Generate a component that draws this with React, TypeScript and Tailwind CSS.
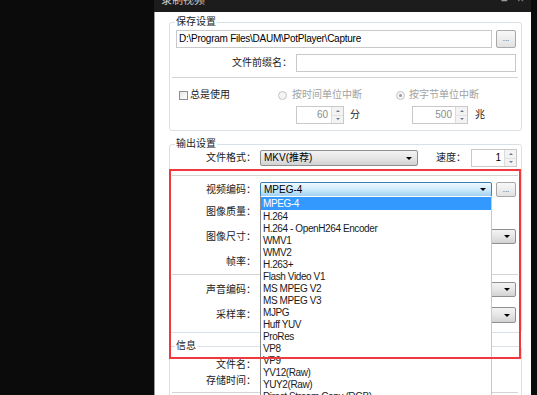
import { ReactNode } from 'react';

const Arrow = () => (
  <span className="mr-[5px] border-x-[3px] border-t-[3px] border-x-transparent border-t-black" />
);

const Combo = ({
  text,
  className = '',
  focused = false,
  children,
}: {
  text?: string;
  className?: string;
  focused?: boolean;
  children?: ReactNode;
}) => (
  <div
    className={`relative flex items-center rounded-[2px] border ${
      focused
        ? 'border-[#3c7fb1] bg-linear-to-b from-[#eef8fe] via-[#cfeafc] to-[#9fd3f1]'
        : 'border-[#8e8f8f] bg-linear-to-b from-[#f3f3f3] via-[#e6e6e6] to-[#d2d2d2]'
    } ${className}`}
  >
    <span className="flex-1 truncate pl-[3px] text-black">{text}</span>
    <Arrow />
    {children}
  </div>
);

const Spin = ({ value, className = '', disabled = false }: { value: string; className?: string; disabled?: boolean }) => (
  <div className={`flex border border-[#c9c9c9] bg-white ${className}`}>
    <span className={`flex-1 self-center pr-[3px] text-right ${disabled ? 'text-[#8c8c8c]' : 'text-black'}`}>{value}</span>
    <div className="flex w-[12px] flex-col border-l border-[#dcdcdc] bg-[#f3f3f3]">
      <div className="flex flex-1 items-center justify-center border-b border-[#e2e2e2]">
        <span className="border-x-[2px] border-b-[2px] border-x-transparent border-b-[#6a7c8c]" />
      </div>
      <div className="flex flex-1 items-center justify-center">
        <span className="border-x-[2px] border-t-[2px] border-x-transparent border-t-[#6a7c8c]" />
      </div>
    </div>
  </div>
);

const DotsButton = ({ className = '' }: { className?: string }) => (
  <div
    className={`flex w-[20px] items-center justify-center rounded-[2px] border border-[#a8a8a8] bg-linear-to-b from-[#f8f8f8] to-[#e2e2e2] text-[8px] leading-none text-[#444] ${className}`}
  >
    ...
  </div>
);

const Label = ({ children, className = 'w-[86px]' }: { children: ReactNode; className?: string }) => (
  <span className={`shrink-0 text-right text-[#222] ${className}`}>{children}</span>
);

const Separator = () => <div className="mr-[3px] ml-[2px] h-[2px] border-t border-b border-t-[#d4d4d4] border-b-white" />;

const codecs = [
  'MPEG-4',
  'H.264',
  'H.264 - OpenH264 Encoder',
  'WMV1',
  'WMV2',
  'H.263+',
  'Flash Video V1',
  'MS MPEG V2',
  'MS MPEG V3',
  'MJPG',
  'Huff YUV',
  'ProRes',
  'VP8',
  'VP9',
  'YV12(Raw)',
  'YUY2(Raw)',
  'Direct Stream Copy (RGB)',
];

export default function App() {
  return (
    <div className="relative h-[395px] w-[537px] overflow-hidden bg-[#0b0b0b] font-['Liberation_Sans','Noto_Sans_CJK_SC',sans-serif] text-[10px] leading-[14px]">
      <div className="ml-[154px] flex h-full w-[377px] flex-col">
        {/* title bar, mostly scrolled off the top */}
        <div className="flex h-[12px] shrink-0 items-start overflow-hidden bg-[#1c1c1c] text-[11px] text-[#c8c8c8]">
          <span className="-mt-[7px] ml-[7px]">录制视频</span>
          <span className="-mt-[8px] ml-auto text-[10px] text-[#9a9a9a]">▰</span>
          <span className="-mt-[8px] mr-[7px] ml-[8px] text-[12px] text-[#9a9a9a]">×</span>
        </div>

        <div className="flex flex-1 flex-col border-l border-[#9a9a9a] bg-white pl-[14px]">
          {/* 保存设置 */}
          <fieldset className="mt-[3px] w-[353px] rounded-[3px] border border-[#d9e1e7] pb-[6px]">
            <legend className="ml-[5px] px-[1px] leading-[14px] text-[#222]">保存设置</legend>
            <div className="mt-[1px] flex h-[18px] pr-[5px] pl-[6px]">
              <div className="flex w-[316px] items-center border border-[#c9c9c9] pl-[2px] tracking-[-0.25px] text-black">
                D:\Program Files\DAUM\PotPlayer\Capture
              </div>
              <DotsButton className="ml-[4px]" />
            </div>
            <div className="mt-[6px] flex h-[18px] items-center">
              <Label className="w-[122px]">文件前缀名：</Label>
              <div className="ml-[4px] h-full w-[220px] border border-[#c9c9c9]" />
            </div>
            <div className="mt-[5px]">
              <Separator />
            </div>
            <div className="mt-[9px] flex h-[14px] items-center pl-[9px]">
              <div className="flex w-[99px] items-center">
                <span className="h-[9px] w-[9px] border border-[#8f8f8f] bg-linear-to-br from-[#e6e6e6] to-white" />
                <span className="ml-[2px] text-[#222]">总是使用</span>
              </div>
              <div className="flex w-[118px] items-center">
                <span className="h-[9px] w-[9px] rounded-full border border-[#c4c4c4] bg-[#f4f4f4]" />
                <span className="ml-[5px] text-[#a2a2a2]">按时间单位中断</span>
              </div>
              <div className="flex items-center">
                <span className="flex h-[9px] w-[9px] items-center justify-center rounded-full border border-[#c4c4c4] bg-[#f4f4f4]">
                  <span className="h-[3px] w-[3px] rounded-full bg-[#9a9a9a]" />
                </span>
                <span className="ml-[4px] text-[#a2a2a2]">按字节单位中断</span>
              </div>
            </div>
            <div className="mt-[4px] flex h-[18px] items-center pl-[126px]">
              <div className="flex h-full w-[116px] items-center">
                <Spin value="60" disabled className="h-full w-[48px]" />
                <span className="ml-[6px] text-[#222]">分</span>
              </div>
              <Spin value="500" disabled className="h-full w-[56px]" />
              <span className="ml-[7px] text-[#222]">兆</span>
            </div>
          </fieldset>

          {/* 输出设置 */}
          <fieldset className="mt-[7px] w-[353px] rounded-[3px] border border-[#d9e1e7] pb-[9px]">
            <legend className="ml-[5px] px-[1px] leading-[12px] text-[#222]">输出设置</legend>
            <div className="-mt-[1px] flex h-[18px] items-center">
              <Label>文件格式：</Label>
              <Combo text="MKV(推荐)" className="ml-[4px] h-[16px] w-[158px]" />
              <span className="ml-[18px] w-[35px] text-[#222]">速度：</span>
              <Spin value="1" className="h-full w-[46px]" />
            </div>
            <div className="mt-[8px]">
              <Separator />
            </div>
            <div className="mt-[5px] flex h-[15px] items-center">
              <Label>视频编码：</Label>
              <Combo text="MPEG-4" focused className="ml-[4px] h-[15px] w-[232px]">
                <div className="absolute top-full -left-px z-10 h-[220px] w-[232px] border-x border-l-[#8a8a8a] border-r-[#c8c8c8] bg-white pt-px">
                  {codecs.map((c, i) => (
                    <div
                      key={c}
                      className={`truncate pl-[2px] tracking-[-0.4px] ${
                        i === 0 ? 'h-[13px] bg-[#3399ff] leading-[13px] text-white' : 'h-[12px] leading-[14px] text-[#1a1a1a]'
                      }`}
                    >
                      {c}
                    </div>
                  ))}
                </div>
              </Combo>
              <DotsButton className="ml-[4px] h-[15px]" />
            </div>
            <div className="mt-[8px] flex h-[14px] items-center">
              <Label>图像质量：</Label>
            </div>
            <div className="mt-[10px] flex h-[15px] items-center">
              <Label>图像尺寸：</Label>
              <Combo text="" className="ml-[4px] h-[15px] w-[256px]" />
            </div>
            <div className="mt-[11px] flex h-[14px] items-center">
              <Label>帧率：</Label>
            </div>
            <div className="mt-[5px]">
              <Separator />
            </div>
            <div className="mt-[6px] flex h-[15px] items-center">
              <Label>声音编码：</Label>
              <Combo text="" className="ml-[4px] h-[15px] w-[256px]" />
            </div>
            <div className="mt-[10px] flex h-[16px] items-center">
              <Label>采样率：</Label>
              <Combo text="" className="ml-[4px] h-[16px] w-[256px]" />
            </div>
          </fieldset>

          {/* 信息 */}
          <fieldset className="mt-[7px] w-[353px] rounded-[3px] border border-[#d9e1e7] pb-[10px]">
            <legend className="ml-[5px] px-[1px] leading-[12px] text-[#222]">信息</legend>
            <div className="mt-[6px] flex h-[14px] items-center">
              <Label>文件名：</Label>
            </div>
            <div className="mt-[2px] flex h-[14px] items-center">
              <Label>存储时间：</Label>
            </div>
            <div className="mt-[4px]">
              <Separator />
            </div>
          </fieldset>
        </div>
      </div>

      {/* red highlight annotation */}
      <div className="pointer-events-none absolute top-[169px] left-[169px] z-20 h-[190px] w-[352px] border-2 border-[#f0383d]" />
    </div>
  );
}
